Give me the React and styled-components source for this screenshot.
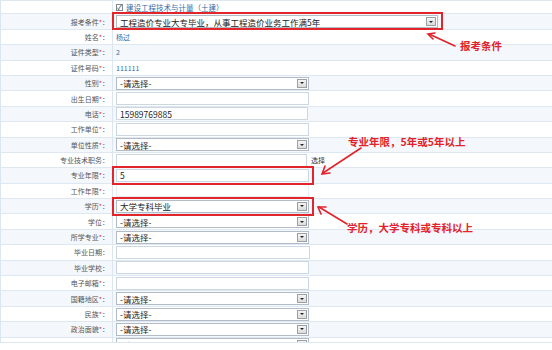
import React from "react";
import styled, { createGlobalStyle } from "styled-components";

const GlobalStyle = createGlobalStyle`
  html, body {
    margin: 0;
    padding: 0;
    background: #ffffff;
  }
  body {
    font-family: "Noto Sans CJK SC", "Noto Sans", sans-serif;
  }
`;

const Page = styled.div`
  position: relative;
  width: 552px;
  height: 350px;
  overflow: hidden;
  background: #fff;
`;

const FormTable = styled.div`
  height: 343px;
  overflow: hidden;
  border-left: 1px solid #dbe6f1;
  border-bottom: 1px solid #dbe6f1;
  box-sizing: border-box;
`;

const Row = styled.div`
  display: grid;
  grid-template-columns: 112px 1fr;
  height: ${(p) => (p.first ? "14.4px" : "15.4px")};
  box-sizing: border-box;
  border-bottom: 1px solid #dde8f3;
  border-top: ${(p) => (p.first ? "1px solid #dde8f3" : "none")};
  background: ${(p) => (p.shaded ? "#f4f8fc" : "#ffffff")};
`;

const LabelCell = styled.div`
  display: flex;
  align-items: center;
  justify-content: flex-end;
  padding-right: 3px;
  border-right: 1px solid #dbe6f1;
  font-size: 7px;
  color: #555;
  white-space: nowrap;
`;

const Star = styled.span`
  color: #e03030;
`;

const ValueCell = styled.div`
  display: flex;
  align-items: center;
  padding-left: 3px;
  gap: 4px;
  font-size: 7px;
  color: #2f6aa8;
  white-space: nowrap;
`;

const TextInput = styled.div`
  width: ${(p) => p.w || 193}px;
  height: 13px;
  box-sizing: border-box;
  border: 1px solid ${(p) => (p.faint ? "#e6edf4" : "#cdd7e1")};
  background: #fff;
  display: flex;
  align-items: center;
  padding-left: 3px;
  font-size: 8.5px;
  color: #222;
`;

const SelectBox = styled.div`
  width: ${(p) => p.w || 193}px;
  height: 13px;
  box-sizing: border-box;
  border: 1px solid #b3bcc6;
  background: #fff;
  display: flex;
  align-items: center;
  justify-content: space-between;
  padding: 0 1px 0 3px;
  font-size: 8.5px;
  color: #222;
`;

const SelectArrow = styled.span`
  width: 10px;
  height: 9px;
  box-sizing: border-box;
  border: 1px solid #9aa0a8;
  background: linear-gradient(#f4f4f4, #dcdcdc);
  display: flex;
  align-items: center;
  justify-content: center;

  &::after {
    content: "";
    border-left: 2px solid transparent;
    border-right: 2px solid transparent;
    border-top: 2px solid #222;
  }
`;

const Highlight = styled.div`
  position: relative;
  display: flex;

  &::after {
    content: "";
    position: absolute;
    top: -3px;
    bottom: ${(p) => p.bottom ?? -3}px;
    left: -4px;
    right: -5px;
    border: 2px solid #e2252b;
    pointer-events: none;
  }
`;

const CheckItem = styled.label`
  display: flex;
  align-items: center;
  gap: 3px;
  color: #2f6aa8;
  font-size: 7.5px;
`;

const CheckBox = styled.span`
  width: 7px;
  height: 7px;
  box-sizing: border-box;
  border: 1px solid #7f8a96;
  background: #fff;
  display: flex;
  align-items: center;
  justify-content: center;
  font-size: 7px;
  line-height: 1;
  color: #333;
`;

const PickText = styled.span`
  color: #333;
  font-size: 7px;
`;

const Note = styled.div`
  position: absolute;
  left: ${(p) => p.x}px;
  top: ${(p) => p.y}px;
  color: #e2222a;
  font-weight: 700;
  font-size: 10.5px;
  white-space: nowrap;
  line-height: 1;
`;

const ArrowLayer = styled.svg`
  position: absolute;
  left: 0;
  top: 0;
  pointer-events: none;
`;

const Select = ({ value = "-请选择-", w }) => (
  <SelectBox w={w}>
    <span>{value}</span>
    <SelectArrow />
  </SelectBox>
);

const Label = ({ text, star, spaced }) => (
  <LabelCell>
    {text}
    {star && <Star>{spaced ? " *" : "*"}</Star>}：
  </LabelCell>
);

const rows = [
  { label: "报考条件", star: true, spaced: true, kind: "main" },
  { label: "姓名", star: true, text: "杨过" },
  { label: "证件类型", star: true, text: "2" },
  { label: "证件号码", star: true, text: "111111" },
  { label: "性别", star: true, kind: "select" },
  { label: "出生日期", star: true, kind: "input" },
  { label: "电话", star: true, kind: "input", value: "15989769885", w: 192 },
  { label: "工作单位", star: true, kind: "input" },
  { label: "单位性质", star: true, kind: "select" },
  { label: "专业技术职务", kind: "pick" },
  { label: "专业年限", star: true, kind: "input", value: "5", mark: true },
  { label: "工作年限", star: true, kind: "input", faint: true },
  { label: "学历", star: true, kind: "select", value: "大学专科毕业", mark: true },
  { label: "学位", kind: "select" },
  { label: "所学专业", star: true, kind: "select" },
  { label: "毕业日期", kind: "input", w: 194 },
  { label: "毕业学校", kind: "input" },
  { label: "电子邮箱", star: true, kind: "input" },
  { label: "国籍地区", star: true, kind: "select" },
  { label: "民族", star: true, kind: "select" },
  { label: "政治面貌", star: true, kind: "select" },
  { label: "专业职称", kind: "select" },
];

const renderValue = (r) => {
  if (r.kind === "main") {
    return (
      <Highlight bottom={-2}>
        <Select value="工程造价专业大专毕业，从事工程造价业务工作满5年" w={322} />
      </Highlight>
    );
  }
  if (r.kind === "select") {
    const s = <Select value={r.value} />;
    return r.mark ? <Highlight>{s}</Highlight> : s;
  }
  if (r.kind === "input") {
    const i = (
      <TextInput w={r.w} faint={r.faint}>
        {r.value}
      </TextInput>
    );
    return r.mark ? <Highlight>{i}</Highlight> : i;
  }
  if (r.kind === "pick") {
    return (
      <>
        <TextInput w={191} />
        <PickText>选择</PickText>
      </>
    );
  }
  return r.text;
};

const App = () => {
  return (
    <Page>
      <GlobalStyle />
      <FormTable>
        <Row first>
          <LabelCell />
          <ValueCell>
            <CheckItem>
              <CheckBox>✓</CheckBox>
              建设工程技术与计量（土建）
            </CheckItem>
          </ValueCell>
        </Row>
        {rows.map((r, i) => (
          <Row key={r.label} shaded={i % 2 === 0}>
            <Label text={r.label} star={r.star} spaced={r.spaced} />
            <ValueCell>{renderValue(r)}</ValueCell>
          </Row>
        ))}
      </FormTable>

      <ArrowLayer width="552" height="350" viewBox="0 0 552 350">
        <g stroke="#e2222a" strokeWidth="1.6" fill="none" strokeLinecap="round">
          <line x1="455" y1="46" x2="429" y2="34" />
          <polyline points="435,33 428,34 433,39" />
          <line x1="361" y1="148" x2="323" y2="173" />
          <polyline points="325,166 322,174 330,173" />
          <line x1="347" y1="224" x2="319" y2="207" />
          <polyline points="321,214 318,207 326,207" />
        </g>
      </ArrowLayer>
      <Note x={460} y={41}>报考条件</Note>
      <Note x={348} y={137}>专业年限，5年或5年以上</Note>
      <Note x={347} y={223}>学历，大学专科或专科以上</Note>
    </Page>
  );
};

export default App;
